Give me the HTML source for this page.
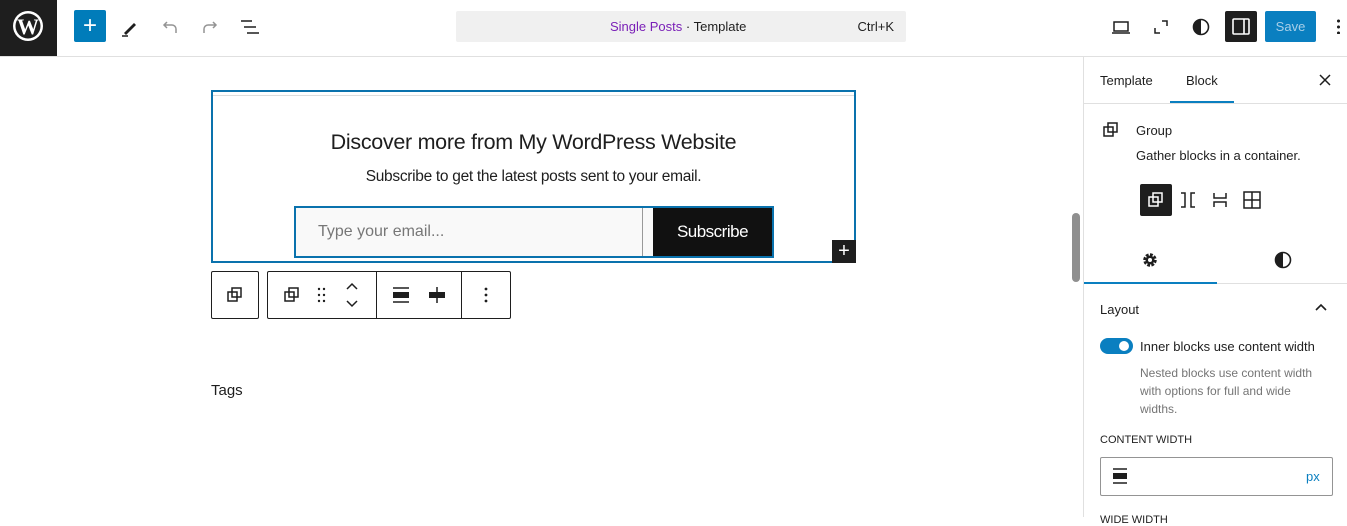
<!DOCTYPE html>
<html><head><meta charset="utf-8"><style>
*{box-sizing:border-box;margin:0;padding:0}
body{width:1347px;height:517px;overflow:hidden;background:#fff;font-family:"Liberation Sans",sans-serif;color:#1e1e1e;position:relative}
.a{position:absolute}
svg{display:block}
</style></head><body>
<div class="a" style="left:0;top:0;width:1347px;height:57px;border-bottom:1px solid #e0e0e0;background:#fff"></div>
<div class="a" style="left:0;top:0;width:57px;height:56px;background:#1e1e1e">
<svg width="57" height="56"><circle cx="28" cy="26" r="15" fill="#fff"/><circle cx="28" cy="26" r="12.5" fill="#1e1e1e"/><text x="28" y="34" text-anchor="middle" font-family="Liberation Serif" font-weight="bold" font-size="22" fill="#fff">W</text></svg></div>
<div class="a" style="top:10px;left:74px;width:32px;height:32px;background:#007cba;border-radius:2px;color:#fff;font-size:24px;line-height:31px;text-align:center">+</div>
<svg class="a" style="left:118px;top:15px" width="24" height="24"><path d="M6 18 L16 8 L18 10 L8 20 Z" fill="#1e1e1e"/><path d="M4 21h6" stroke="#1e1e1e" stroke-width="1.5"/></svg>
<svg class="a" style="left:158px;top:15px" width="24" height="24"><path d="M18 18v-4a4 4 0 0 0-4-4H6M9 7l-3 3 3 3" fill="none" stroke="#949494" stroke-width="1.5"/></svg>
<svg class="a" style="left:198px;top:15px" width="24" height="24"><path d="M6 18v-4a4 4 0 0 1 4-4h8M15 7l3 3-3 3" fill="none" stroke="#949494" stroke-width="1.5"/></svg>
<svg class="a" style="left:238px;top:15px" width="24" height="24"><path d="M3 6h11M6 12h12M9 18h12" stroke="#1e1e1e" stroke-width="1.6"/></svg>
<div class="a" style="left:456px;top:11px;width:450px;height:31px;background:#f0f0f0;border-radius:2px;font-size:13px;line-height:31px"><span class="a" style="left:154px;top:0"><span style="color:#7a20b7">Single Posts</span> · Template</span><span class="a" style="right:12px;top:0">Ctrl+K</span></div>
<svg class="a" style="left:1109px;top:15px" width="24" height="24"><path d="M5 7h14v9H5z M3 18h18" fill="none" stroke="#1e1e1e" stroke-width="1.5"/></svg>
<svg class="a" style="left:1149px;top:15px" width="24" height="24"><path d="M6 13v5h5M18 11V6h-5" fill="none" stroke="#1e1e1e" stroke-width="1.5"/></svg>
<svg class="a" style="left:1189px;top:15px" width="24" height="24"><circle cx="12" cy="12" r="7.5" fill="none" stroke="#1e1e1e" stroke-width="1.6"/><path d="M12 4.5a7.5 7.5 0 0 0 0 15z" fill="#1e1e1e"/></svg>
<div class="a" style="left:1225px;top:11px;width:32px;height:31px;background:#1e1e1e;border-radius:2px"><svg width="32" height="31"><rect x="8" y="8" width="16" height="15" rx="1" fill="none" stroke="#fff" stroke-width="1.6"/><path d="M19 8v15" stroke="#fff" stroke-width="1.6"/></svg></div>
<div class="a" style="left:1265px;top:11px;width:51px;height:31px;background:#0a7fc0;border-radius:2px;color:#a8cfe8;font-size:13px;line-height:31px;text-align:center">Save</div>
<div class="a" style="left:1337px;top:18px;width:3px;height:16px;background:radial-gradient(circle,#1e1e1e 1.4px,transparent 1.6px) 0 0/3px 6px"></div>

<div class="a" style="left:211px;top:90px;width:645px;height:173px;border:2px solid #0a72ad"></div>
<div class="a" style="left:213px;top:95px;width:641px;height:1px;background:#ddd"></div>
<div class="a" style="left:213px;top:130px;width:641px;text-align:center;font-size:21.5px;letter-spacing:-0.3px">Discover more from My WordPress Website</div>
<div class="a" style="left:213px;top:168px;width:641px;text-align:center;font-size:15.5px;letter-spacing:-0.3px">Subscribe to get the latest posts sent to your email.</div>
<div class="a" style="left:294px;top:206px;width:480px;height:52px;border:2px solid #0a72ad;background:#f9f9f9"></div>
<div class="a" style="left:642px;top:208px;width:1px;height:48px;background:#999"></div>
<div class="a" style="left:318px;top:223px;font-size:16px;color:#777">Type your email...</div>
<div class="a" style="left:653px;top:208px;width:119px;height:48px;background:#111;color:#fff;font-size:17px;line-height:48px;text-align:center;letter-spacing:-0.5px">Subscribe</div>
<div class="a" style="left:832px;top:240px;width:24px;height:23px;background:#1e1e1e;color:#fff;font-size:20px;line-height:22px;text-align:center">+</div>

<div class="a" style="left:211px;top:271px;width:48px;height:48px;border:1px solid #1e1e1e;border-radius:2px"></div>
<div class="a" style="left:267px;top:271px;width:244px;height:48px;border:1px solid #1e1e1e;border-radius:2px"></div>
<div class="a" style="left:376px;top:272px;width:1px;height:46px;background:#1e1e1e"></div>
<div class="a" style="left:461px;top:272px;width:1px;height:46px;background:#1e1e1e"></div>
<svg class="a" style="left:225px;top:285px" width="20" height="20"><path d="M3 7h9v9H3z M7 3h9v9H7z" fill="none" stroke="#1e1e1e" stroke-width="1.5"/></svg>
<svg class="a" style="left:282px;top:285px" width="20" height="20"><path d="M3 7h9v9H3z M7 3h9v9H7z" fill="none" stroke="#1e1e1e" stroke-width="1.5"/></svg>
<svg class="a" style="left:314px;top:286px" width="16" height="18" fill="#1e1e1e"><circle cx="5" cy="3" r="1.2"/><circle cx="10" cy="3" r="1.2"/><circle cx="5" cy="9" r="1.2"/><circle cx="10" cy="9" r="1.2"/><circle cx="5" cy="15" r="1.2"/><circle cx="10" cy="15" r="1.2"/></svg>
<svg class="a" style="left:343px;top:280px" width="18" height="30"><path d="M4 9l5-5 5 5M4 21l5 5 5-5" fill="none" stroke="#1e1e1e" stroke-width="1.5"/></svg>
<svg class="a" style="left:390px;top:285px" width="22" height="20"><path d="M3 3h16M3 17h16" stroke="#1e1e1e" stroke-width="1.5"/><rect x="3" y="7" width="16" height="6" fill="#1e1e1e"/></svg>
<svg class="a" style="left:426px;top:285px" width="22" height="20"><rect x="3" y="7" width="16" height="6" fill="#1e1e1e"/><path d="M11 2v16" stroke="#1e1e1e" stroke-width="1.5"/></svg>
<svg class="a" style="left:478px;top:285px" width="16" height="20" fill="#1e1e1e"><circle cx="8" cy="4" r="1.4"/><circle cx="8" cy="10" r="1.4"/><circle cx="8" cy="16" r="1.4"/></svg>
<div class="a" style="left:211px;top:382px;font-size:15px">Tags</div>

<div class="a" style="left:1072px;top:213px;width:8px;height:69px;background:#8f8f8f;border-radius:4px"></div>

<div class="a" style="left:1083px;top:57px;width:1px;height:460px;background:#e0e0e0"></div>
<div class="a" style="left:1084px;top:103px;width:263px;height:1px;background:#e0e0e0"></div>
<div class="a" style="left:1100px;top:73px;font-size:13px">Template</div>
<div class="a" style="left:1186px;top:73px;font-size:13px">Block</div>
<div class="a" style="left:1170px;top:101px;width:64px;height:2px;background:#0a7fc0"></div>
<svg class="a" style="left:1316px;top:71px" width="18" height="18"><path d="M4 4l10 10M14 4L4 14" stroke="#1e1e1e" stroke-width="1.5"/></svg>
<svg class="a" style="left:1101px;top:120px" width="20" height="20"><path d="M3 7h9v9H3z M7 3h9v9H7z" fill="none" stroke="#1e1e1e" stroke-width="1.5"/></svg>
<div class="a" style="left:1136px;top:123px;font-size:13px">Group</div>
<div class="a" style="left:1136px;top:148px;font-size:13px">Gather blocks in a container.</div>
<div class="a" style="left:1140px;top:184px;width:32px;height:32px;background:#1e1e1e;border-radius:2px"><svg width="32" height="32"><path d="M9 13h9v9H9z M13 9h9v9h-9z" fill="none" stroke="#fff" stroke-width="1.5"/></svg></div>
<svg class="a" style="left:1176px;top:188px" width="24" height="24"><path d="M5 5h4v14H5M19 5h-4v14h4" fill="none" stroke="#1e1e1e" stroke-width="1.5"/></svg>
<svg class="a" style="left:1208px;top:188px" width="24" height="24"><path d="M6 5v5h12V5M6 19v-5h12v5" fill="none" stroke="#1e1e1e" stroke-width="1.5"/></svg>
<svg class="a" style="left:1240px;top:188px" width="24" height="24"><path d="M4 4h16v16H4z M12 4v16M4 12h16" fill="none" stroke="#1e1e1e" stroke-width="1.5"/></svg>
<svg class="a" style="left:1140px;top:250px" width="20" height="20"><circle cx="10" cy="10" r="5" fill="none" stroke="#1e1e1e" stroke-width="3.5" stroke-dasharray="2.6 1.3"/><circle cx="10" cy="10" r="4.5" fill="#1e1e1e"/><circle cx="10" cy="10" r="2" fill="#fff"/></svg>
<svg class="a" style="left:1273px;top:250px" width="20" height="20"><circle cx="10" cy="10" r="7.5" fill="none" stroke="#1e1e1e" stroke-width="1.6"/><path d="M10 2.5a7.5 7.5 0 0 0 0 15z" fill="#1e1e1e"/></svg>
<div class="a" style="left:1084px;top:283px;width:263px;height:1px;background:#e0e0e0"></div>
<div class="a" style="left:1084px;top:282px;width:133px;height:2px;background:#0a7fc0"></div>
<div class="a" style="left:1100px;top:302px;font-size:13px">Layout</div>
<svg class="a" style="left:1312px;top:299px" width="18" height="18"><path d="M4 11l5-5 5 5" fill="none" stroke="#1e1e1e" stroke-width="1.6"/></svg>
<div class="a" style="left:1100px;top:338px;width:33px;height:16px;background:#0a7fc0;border-radius:8px"><div class="a" style="left:19px;top:3px;width:10px;height:10px;background:#fff;border-radius:50%"></div></div>
<div class="a" style="left:1140px;top:339px;font-size:13px">Inner blocks use content width</div>
<div class="a" style="left:1140px;top:364px;font-size:12px;color:#757575;line-height:18px;width:190px">Nested blocks use content width with options for full and wide widths.</div>
<div class="a" style="left:1100px;top:434px;font-size:11px;font-weight:500">CONTENT WIDTH</div>
<div class="a" style="left:1100px;top:457px;width:233px;height:39px;border:1px solid #949494;border-radius:2px"></div>
<svg class="a" style="left:1111px;top:467px" width="18" height="18"><path d="M2 2h14M2 16h14" stroke="#1e1e1e" stroke-width="1.5"/><rect x="2" y="6" width="14" height="6" fill="#1e1e1e"/></svg>
<div class="a" style="left:1306px;top:469px;font-size:13px;color:#0a7fc0">px</div>
<div class="a" style="left:1100px;top:514px;font-size:11px">WIDE WIDTH</div>
</body></html>
